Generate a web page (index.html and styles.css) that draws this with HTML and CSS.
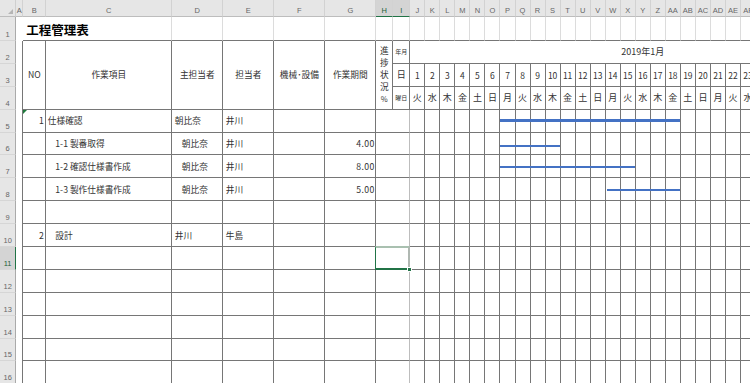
FILE: index.html
```html
<!DOCTYPE html>
<html lang="ja">
<head>
<meta charset="utf-8">
<title>工程管理表</title>
<link rel="stylesheet" href="styles.css">
</head>
<body>
<div class="sheet">
<!-- column headers -->
<div class="corner"></div>
<div class="ch">A</div><div class="ch">B</div><div class="ch">C</div><div class="ch">D</div><div class="ch">E</div><div class="ch">F</div><div class="ch">G</div><div class="ch sel">H</div><div class="ch sel">I</div>
<div class="ch">J</div><div class="ch">K</div><div class="ch">L</div><div class="ch">M</div><div class="ch">N</div><div class="ch">O</div><div class="ch">P</div><div class="ch">Q</div><div class="ch">R</div><div class="ch">S</div><div class="ch">T</div><div class="ch">U</div><div class="ch">V</div><div class="ch">W</div><div class="ch">X</div><div class="ch">Y</div><div class="ch">Z</div><div class="ch">AA</div><div class="ch">AB</div><div class="ch">AC</div><div class="ch">AD</div><div class="ch">AE</div><div class="ch">AF</div>

<!-- row 1 -->
<div class="rh">1</div><div class="a"></div>
<div class="r1 title">工程管理表</div>
<div class="r1"></div><div class="r1"></div><div class="r1"></div><div class="r1"></div><div class="r1"></div><div class="r1"></div>
<div class="r1"></div><div class="r1"></div><div class="r1"></div><div class="r1"></div><div class="r1"></div><div class="r1"></div><div class="r1"></div><div class="r1"></div><div class="r1"></div><div class="r1"></div>
<div class="r1"></div><div class="r1"></div><div class="r1"></div><div class="r1"></div><div class="r1"></div><div class="r1"></div><div class="r1"></div><div class="r1"></div><div class="r1"></div><div class="r1"></div>
<div class="r1"></div><div class="r1"></div><div class="r1"></div>

<!-- row 2 -->
<div class="rh">2</div><div class="a edge"></div>
<div class="rs3">NO</div>
<div class="rs3">作業項目</div>
<div class="rs3">主担当者</div>
<div class="rs3">担当者</div>
<div class="rs3">機械･設備</div>
<div class="rs3">作業期間</div>
<div class="rs3 vert"><span>進<br>捗<br>状<br>況<br><small>%</small></span></div>
<div class="tiny">年月</div>
<div class="month">2019年1月</div>

<!-- row 3 -->
<div class="rh">3</div><div class="a edge"></div>
<div class="dayhd">日</div>
<div class="dn">1</div><div class="dn">2</div><div class="dn">3</div><div class="dn">4</div><div class="dn">5</div><div class="dn">6</div><div class="dn">7</div><div class="dn">8</div><div class="dn">9</div><div class="dn">10</div>
<div class="dn">11</div><div class="dn">12</div><div class="dn">13</div><div class="dn">14</div><div class="dn">15</div><div class="dn">16</div><div class="dn">17</div><div class="dn">18</div><div class="dn">19</div><div class="dn">20</div>
<div class="dn">21</div><div class="dn">22</div><div class="dn">23</div>

<!-- row 4 -->
<div class="rh">4</div><div class="a edge"></div>
<div class="tiny">曜日</div>
<div class="wd">火</div><div class="wd">水</div><div class="wd">木</div><div class="wd">金</div><div class="wd">土</div><div class="wd">日</div><div class="wd">月</div>
<div class="wd">火</div><div class="wd">水</div><div class="wd">木</div><div class="wd">金</div><div class="wd">土</div><div class="wd">日</div><div class="wd">月</div>
<div class="wd">火</div><div class="wd">水</div><div class="wd">木</div><div class="wd">金</div><div class="wd">土</div><div class="wd">日</div><div class="wd">月</div>
<div class="wd">火</div><div class="wd">水</div>

<!-- row 5 -->
<div class="rh">5</div><div class="a edge"></div>
<div class="no err">1</div>
<div class="item">仕様確認</div>
<div class="person">朝比奈</div>
<div class="person">井川</div>
<div></div><div></div>
<div class="hi"></div>
<div></div><div></div><div></div><div></div><div></div><div></div>
<div class="g"><span class="bar thick" style="--days:12"></span></div>
<div></div><div></div><div></div><div></div><div></div><div></div><div></div><div></div><div></div><div></div>
<div></div><div></div><div></div><div></div><div></div><div></div>

<!-- row 6 -->
<div class="rh">6</div><div class="a edge"></div>
<div class="no"></div>
<div class="item sub">1-1 製番取得</div>
<div class="person sub">朝比奈</div>
<div class="person">井川</div>
<div></div>
<div class="num">4.00</div>
<div class="hi"></div>
<div></div><div></div><div></div><div></div><div></div><div></div>
<div class="g"><span class="bar low" style="--days:4"></span></div>
<div></div><div></div><div></div><div></div><div></div><div></div><div></div><div></div><div></div><div></div>
<div></div><div></div><div></div><div></div><div></div><div></div>

<!-- row 7 -->
<div class="rh">7</div><div class="a edge"></div>
<div class="no"></div>
<div class="item sub">1-2 確認仕様書作成</div>
<div class="person sub">朝比奈</div>
<div class="person">井川</div>
<div></div>
<div class="num">8.00</div>
<div class="hi"></div>
<div></div><div></div><div></div><div></div><div></div><div></div>
<div class="g"><span class="bar" style="--days:9"></span></div>
<div></div><div></div><div></div><div></div><div></div><div></div><div></div><div></div><div></div><div></div>
<div></div><div></div><div></div><div></div><div></div><div></div>

<!-- row 8 -->
<div class="rh">8</div><div class="a edge"></div>
<div class="no"></div>
<div class="item sub">1-3 製作仕様書作成</div>
<div class="person sub">朝比奈</div>
<div class="person">井川</div>
<div></div>
<div class="num">5.00</div>
<div class="hi"></div>
<div></div><div></div><div></div><div></div><div></div><div></div><div></div><div></div><div></div><div></div>
<div></div><div></div><div></div>
<div class="g"><span class="bar off" style="--days:5"></span></div>
<div></div><div></div><div></div><div></div><div></div><div></div><div></div><div></div><div></div>

<!-- row 9 -->
<div class="rh">9</div><div class="a edge"></div>
<div></div><div></div><div></div><div></div><div></div><div></div>
<div class="hi"></div>
<div></div><div></div><div></div><div></div><div></div><div></div><div></div><div></div><div></div><div></div>
<div></div><div></div><div></div><div></div><div></div><div></div><div></div><div></div><div></div><div></div>
<div></div><div></div><div></div>

<!-- row 10 -->
<div class="rh">10</div><div class="a edge"></div>
<div class="no">2</div>
<div class="item sub">設計</div>
<div class="person">井川</div>
<div class="person">牛島</div>
<div></div><div></div>
<div class="hi"></div>
<div></div><div></div><div></div><div></div><div></div><div></div><div></div><div></div><div></div><div></div>
<div></div><div></div><div></div><div></div><div></div><div></div><div></div><div></div><div></div><div></div>
<div></div><div></div><div></div>

<!-- row 11 -->
<div class="rh sel">11</div><div class="a edge"></div>
<div></div><div></div><div></div><div></div><div></div><div></div>
<div class="hi cur"></div>
<div></div><div></div><div></div><div></div><div></div><div></div><div></div><div></div><div></div><div></div>
<div></div><div></div><div></div><div></div><div></div><div></div><div></div><div></div><div></div><div></div>
<div></div><div></div><div></div>

<!-- row 12 -->
<div class="rh">12</div><div class="a edge"></div>
<div></div><div></div><div></div><div></div><div></div><div></div>
<div class="hi"></div>
<div></div><div></div><div></div><div></div><div></div><div></div><div></div><div></div><div></div><div></div>
<div></div><div></div><div></div><div></div><div></div><div></div><div></div><div></div><div></div><div></div>
<div></div><div></div><div></div>

<!-- row 13 -->
<div class="rh">13</div><div class="a edge"></div>
<div></div><div></div><div></div><div></div><div></div><div></div>
<div class="hi"></div>
<div></div><div></div><div></div><div></div><div></div><div></div><div></div><div></div><div></div><div></div>
<div></div><div></div><div></div><div></div><div></div><div></div><div></div><div></div><div></div><div></div>
<div></div><div></div><div></div>

<!-- row 14 -->
<div class="rh">14</div><div class="a edge"></div>
<div></div><div></div><div></div><div></div><div></div><div></div>
<div class="hi"></div>
<div></div><div></div><div></div><div></div><div></div><div></div><div></div><div></div><div></div><div></div>
<div></div><div></div><div></div><div></div><div></div><div></div><div></div><div></div><div></div><div></div>
<div></div><div></div><div></div>

<!-- row 15 -->
<div class="rh">15</div><div class="a edge"></div>
<div></div><div></div><div></div><div></div><div></div><div></div>
<div class="hi"></div>
<div></div><div></div><div></div><div></div><div></div><div></div><div></div><div></div><div></div><div></div>
<div></div><div></div><div></div><div></div><div></div><div></div><div></div><div></div><div></div><div></div>
<div></div><div></div><div></div>

<!-- row 16 -->
<div class="rh">16</div><div class="a edge"></div>
<div></div><div></div><div></div><div></div><div></div><div></div>
<div class="hi"></div>
<div></div><div></div><div></div><div></div><div></div><div></div><div></div><div></div><div></div><div></div>
<div></div><div></div><div></div><div></div><div></div><div></div><div></div><div></div><div></div><div></div>
<div></div><div></div><div></div>
</div>
</body>
</html>
```

FILE: styles.css
```css
html, body {
  margin: 0;
  padding: 0;
}

body {
  width: 750px;
  height: 383px;
  overflow: hidden;
  background: #fff;
}

.sheet {
  display: grid;
  grid-template-columns: 16.3px 7px 23px 126px 51px 51px 51px 51px 17px 17px repeat(23, 15.04px);
  grid-template-rows: 17.3px 23.7px repeat(15, 22.9px);
  width: max-content;
  font-family: "Noto Sans CJK JP", "Noto Sans", sans-serif;
  font-size: 8.7px;
  color: #333;
}

:where(.sheet > div) {
  box-sizing: border-box;
  display: flex;
  align-items: center;
  min-width: 0;
  white-space: nowrap;
  border-right: 1px solid #767676;
  border-bottom: 1px solid #767676;
}

/* headers */
.corner {
  background: #e6e6e6;
  border-right-color: #cfcfcf;
  border-bottom-color: #bdbdbd;
  justify-content: flex-end;
  align-items: flex-end;
  padding: 0 2px 2px 0;
}

.corner::after {
  content: "";
  border-left: 5px solid transparent;
  border-bottom: 5px solid #b5b5b5;
}

.ch {
  background: #e6e6e6;
  border-right-color: #d2d2d2;
  border-bottom-color: #bdbdbd;
  justify-content: center;
  align-items: flex-end;
  padding-bottom: 1.5px;
  font: 7.5px/1 "Liberation Sans", sans-serif;
  color: #666;
}

.ch.sel {
  background: #d4d4d4;
  border-bottom: 1.5px solid #217346;
  color: #1f5f38;
}

.rh {
  background: #e6e6e6;
  border-right-color: #aaaaaa;
  border-bottom-color: #d6d6d6;
  justify-content: center;
  align-items: flex-end;
  padding-bottom: 1.5px;
  font: 7.5px/1 "Liberation Sans", sans-serif;
  color: #666;
}

.rh.sel {
  background: #d4d4d4;
  border-right: 1.5px solid #217346;
  color: #1f5f38;
}

/* column A */
.a {
  border: 0;
}

.a.edge {
  border-right: 1px solid #767676;
}

/* row 1 */
.r1 {
  border-right-color: #dcdcdc;
}

.title {
  grid-column: span 2;
  font-size: 12.5px;
  font-weight: bold;
  color: #000;
  padding: 2px 0 0 3px;
}

/* table header */
.rs3 {
  grid-row: span 3;
  justify-content: center;
}

.vert span {
  text-align: center;
  line-height: 11.8px;
  font-size: 8.7px;
}

.vert small {
  font-size: 7.5px;
}

.tiny {
  justify-content: center;
  font-size: 6px;
}

.dayhd {
  justify-content: center;
  font-size: 9px;
}

/* the month cell is merged across all 31 days; only 23 are in view,
   so the label is centred on the full merged width */
.month {
  grid-column: span 23;
  justify-content: center;
  padding-left: 120px;
  font-size: 9px;
}

.dn {
  justify-content: center;
  font-size: 8.5px;
}

.wd {
  justify-content: center;
  font-size: 9px;
}

/* data */
.no {
  justify-content: flex-end;
  padding-right: 1.5px;
}

.item {
  padding-left: 1.5px;
}

.item.sub {
  padding-left: 9px;
}

.person {
  padding-left: 2.5px;
}

.person.sub {
  padding-left: 9.5px;
}

.num {
  justify-content: flex-end;
  padding-right: 0.5px;
  letter-spacing: 0.4px;
}

.hi {
  grid-column: span 2;
  border-right-color: #bdbdbd;
}

.err {
  position: relative;
}

.err::before {
  content: "";
  position: absolute;
  top: 0;
  left: 0;
  border-top: 4px solid #1f7a3c;
  border-right: 4px solid transparent;
}

/* gantt bars */
.g {
  position: relative;
}

.bar {
  position: absolute;
  left: 0;
  top: calc(50% - 0.3px);
  height: 2px;
  width: calc(var(--days) * 15.04px - 1px);
  background: #4472c4;
}

.bar.thick {
  height: 3px;
  top: calc(50% - 1.3px);
}

.bar.low {
  top: calc(50% + 1.2px);
}

.bar.off {
  left: 1.5px;
  width: calc(var(--days) * 15.04px - 2.5px);
}

/* active cell */
.cur {
  position: relative;
}

.cur::before {
  content: "";
  position: absolute;
  left: -1px;
  top: -1px;
  right: -1px;
  bottom: -1px;
  border-left: 1px solid #217346;
  border-top: 2px solid #a9c0b0;
  border-right: 2px solid #b0b8b2;
  border-bottom: 2px solid #217346;
}

.cur::after {
  content: "";
  position: absolute;
  right: -3px;
  bottom: -3px;
  width: 3px;
  height: 3px;
  background: #217346;
  border: 1px solid #fff;
}
```
